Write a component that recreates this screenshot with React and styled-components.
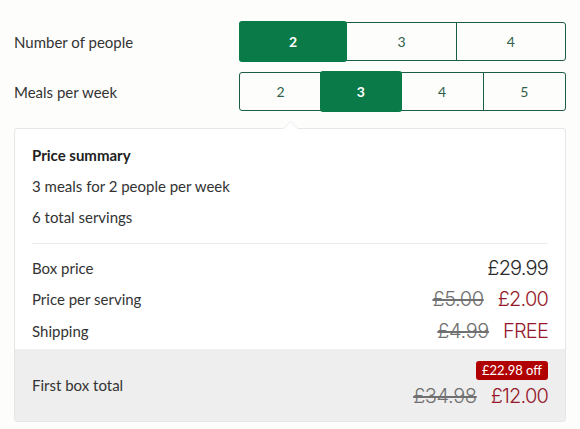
import React from "react";
import styled, { createGlobalStyle } from "styled-components";

const GlobalStyle = createGlobalStyle`
  body {
    margin: 0;
    background: #fdfdfc;
    font-family: Lato, "Noto Sans", sans-serif;
    color: #333;
  }
`;

const Page = styled.div`
  width: 552px;
  padding: 21px 14px 0 14px;
`;

const OptionRow = styled.div`
  display: flex;
  align-items: center;
  justify-content: space-between;
  height: 41px;
  margin-bottom: 9px;
`;

const Label = styled.div`
  font-size: 15px;
  color: #333;
`;

const Segments = styled.div`
  display: flex;
  width: 327px;
  height: 39px;
  border: 1px solid #1c5e44;
  border-radius: 3px;
  box-sizing: border-box;
`;

const Segment = styled.div`
  flex: 1;
  display: flex;
  align-items: center;
  justify-content: center;
  font-size: 14px;
  box-sizing: border-box;
  border-left: ${(p) => (p.$first ? "none" : "1px solid #1c5e44")};
  color: ${(p) => (p.$active ? "#fff" : "#2f5f4a")};
  font-weight: ${(p) => (p.$active ? 700 : 400)};
  background: ${(p) => (p.$active ? "#0a7a48" : "transparent")};
  ${(p) =>
    p.$active &&
    `
    margin: -2px 0 -2px -1px;
    border-left: none;
    border-radius: 3px;
    position: relative;
  `}
`;

const Card = styled.div`
  width: 552px;
  box-sizing: border-box;
  margin-top: 16px;
  border: 1px solid #e6e6e6;
  border-radius: 3px;
  background: #fff;
  position: relative;

  &::before {
    content: "";
    position: absolute;
    top: -6px;
    left: 270px;
    width: 10px;
    height: 10px;
    background: #fff;
    border-left: 1px solid #f1f1f1;
    border-top: 1px solid #f1f1f1;
    transform: rotate(45deg);
  }
`;

const Summary = styled.div`
  padding: 16px 17px 0 17px;
`;

const Title = styled.div`
  font-size: 15px;
  font-weight: 700;
  color: #222;
  line-height: 20px;
  margin-bottom: 11px;
`;

const Info = styled.div`
  font-size: 15px;
  line-height: 20px;
  margin-bottom: 11px;
`;

const Divider = styled.div`
  height: 1px;
  background: #ebebeb;
  margin-top: 16px;
`;

const Lines = styled.div`
  padding: 8px 17px 2px 17px;
`;

const Line = styled.div`
  display: flex;
  justify-content: space-between;
  align-items: center;
  height: 31.5px;
`;

const Prices = styled.div`
  display: flex;
  align-items: baseline;
  gap: 14px;
  font-family: Inter, "Noto Sans", sans-serif;
  font-weight: 300;
  font-size: 20px;
  letter-spacing: -0.8px;
`;

const Price = styled.span`
  color: ${(p) => (p.$sale ? "#96182a" : "#2a2a2a")};
`;

const Old = styled.span`
  color: #707070;
  letter-spacing: -0.4px;
  text-decoration: line-through;
  text-decoration-thickness: 1.5px;
`;

const Footer = styled.div`
  background: #eeeeee;
  display: flex;
  justify-content: space-between;
  align-items: center;
  padding: 12px 17px 12px 17px;
  height: 72px;
  box-sizing: border-box;
`;

const Totals = styled.div`
  display: flex;
  flex-direction: column;
  align-items: flex-end;
  gap: 4px;
`;

const Badge = styled.span`
  background: #b00000;
  color: #fff;
  font-size: 13px;
  padding: 1px 6px 2px;
  border-radius: 3px;
  line-height: 16px;
`;

function SegmentGroup({ options, active }) {
  return (
    <Segments>
      {options.map((o, i) => (
        <Segment key={o} $first={i === 0 || options[i - 1] === active} $active={o === active}>
          {o}
        </Segment>
      ))}
    </Segments>
  );
}

export default function App() {
  return (
    <>
      <GlobalStyle />
      <Page>
        <OptionRow>
          <Label>Number of people</Label>
          <SegmentGroup options={["2", "3", "4"]} active="2" />
        </OptionRow>
        <OptionRow>
          <Label>Meals per week</Label>
          <SegmentGroup options={["2", "3", "4", "5"]} active="3" />
        </OptionRow>
        <Card>
          <Summary>
            <Title>Price summary</Title>
            <Info>3 meals for 2 people per week</Info>
            <Info>6 total servings</Info>
            <Divider />
          </Summary>
          <Lines>
            <Line>
              <Label>Box price</Label>
              <Prices>
                <Price>£29.99</Price>
              </Prices>
            </Line>
            <Line>
              <Label>Price per serving</Label>
              <Prices>
                <Old>£5.00</Old>
                <Price $sale>£2.00</Price>
              </Prices>
            </Line>
            <Line>
              <Label>Shipping</Label>
              <Prices>
                <Old>£4.99</Old>
                <Price $sale>FREE</Price>
              </Prices>
            </Line>
          </Lines>
          <Footer>
            <Label>First box total</Label>
            <Totals>
              <Badge>£22.98 off</Badge>
              <Prices>
                <Old>£34.98</Old>
                <Price $sale>£12.00</Price>
              </Prices>
            </Totals>
          </Footer>
        </Card>
      </Page>
    </>
  );
}
